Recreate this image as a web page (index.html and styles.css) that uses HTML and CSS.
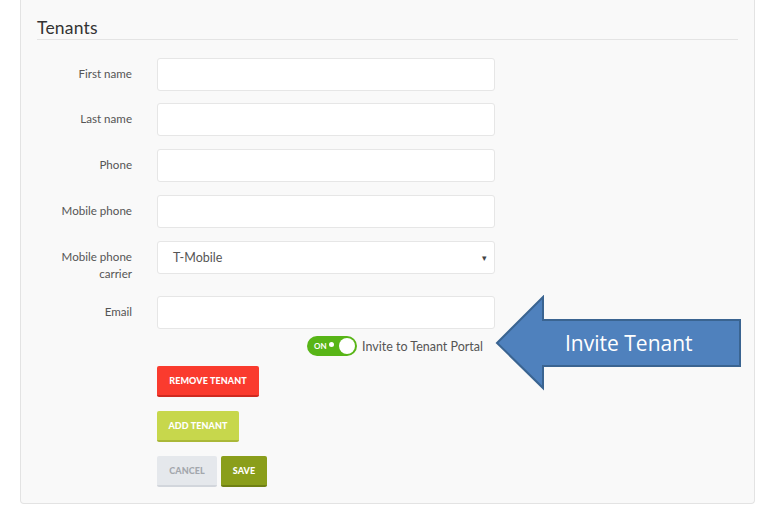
FILE: index.html
```html
<!DOCTYPE html>
<html>
<head>
<meta charset="utf-8">
<link rel="stylesheet" href="styles.css">
</head>
<body>
<div class="panel">
  <h2 class="title">Tenants</h2>
  <div class="row row-first">
    <label class="lbl">First name</label>
    <div class="field"><input class="input" type="text"></div>
  </div>
  <div class="row row-second">
    <label class="lbl">Last name</label>
    <div class="field"><input class="input" type="text"></div>
  </div>
  <div class="row">
    <label class="lbl">Phone</label>
    <div class="field"><input class="input" type="text"></div>
  </div>
  <div class="row">
    <label class="lbl">Mobile phone</label>
    <div class="field"><input class="input" type="text"></div>
  </div>
  <div class="row">
    <label class="lbl">Mobile phone carrier</label>
    <div class="field">
      <div class="select"><span>T-Mobile</span><span class="caret">&#9662;</span></div>
    </div>
  </div>
  <div class="row row-email">
    <label class="lbl">Email</label>
    <div class="field">
      <input class="input" type="text">
      <div class="invite">
        <span class="toggle"><span class="on">ON</span><span class="dot"></span><span class="knob"></span></span>
        <span class="invite-text">Invite to Tenant Portal</span>
      </div>
    </div>
  </div>
  <div class="actions">
    <div><button class="btn btn-remove">REMOVE TENANT</button></div>
    <div><button class="btn btn-add">ADD TENANT</button></div>
    <div class="pair"><button class="btn btn-cancel">CANCEL</button><button class="btn btn-save">SAVE</button></div>
  </div>
</div>
<div class="callout">
  <svg width="250" height="98" viewBox="0 0 250 98">
    <polygon points="2,48 48,2 48,25 245,25 245,71 48,71 48,93" fill="#4f81bd" stroke="#3a6491" stroke-width="2" stroke-linejoin="miter"/>
  </svg>
  <span class="callout-text">Invite Tenant</span>
</div>
</body>
</html>
```
FILE: styles.css
```css
* { box-sizing: border-box; }
body {
  margin: 0;
  background: #ffffff;
  font-family: "Lato", "Open Sans", sans-serif;
  position: relative;
  width: 765px;
  height: 515px;
  overflow: hidden;
}
.panel {
  margin-left: 20px;
  width: 735px;
  height: 504px;
  background: #f9f9f9;
  border: 1px solid #e3e3e3;
  border-top: none;
  border-radius: 0 0 4px 4px;
  padding: 17px 16px 0 16px;
}
.title {
  margin: 0;
  font-weight: 400;
  font-size: 17.5px;
  color: #333;
  line-height: 22px;
  padding-bottom: 0;
  border-bottom: 1px solid #e4e4e4;
  letter-spacing: 0.2px;
}
.row {
  display: flex;
  gap: 25px;
  margin-top: 13px;
}
.row-first { margin-top: 18px; }
.row-second { margin-top: 12px; }
.row-email { margin-top: 14px; }
.lbl {
  width: 95px;
  text-align: right;
  font-size: 11.6px;
  line-height: 17px;
  color: #555;
  padding-top: 7px;
  min-height: 33px;
}
.field { width: 338px; }
.input {
  display: block;
  width: 338px;
  height: 33px;
  border: 1px solid #e6e6e6;
  border-radius: 3px;
  background: #fff;
  outline: none;
  margin: 0;
}
.select {
  display: flex;
  justify-content: space-between;
  align-items: center;
  height: 33px;
  border: 1px solid #e6e6e6;
  border-radius: 3px;
  background: #fff;
  padding: 0 7px 0 15px;
  font-size: 12.5px;
  color: #555;
}
.caret { font-size: 9px; color: #444; }
.invite {
  display: flex;
  justify-content: flex-end;
  align-items: center;
  gap: 5px;
  padding-right: 12px;
  margin-top: 7px;
  height: 20px;
}
.toggle {
  position: relative;
  display: flex;
  align-items: center;
  width: 50px;
  height: 20px;
  border-radius: 10px;
  background: #58b517;
  padding-left: 7px;
}
.on {
  color: #fff;
  font-size: 8px;
  font-weight: 700;
}
.dot {
  width: 5px;
  height: 5px;
  border-radius: 50%;
  background: #fff;
  margin-left: 2px;
  margin-top: -3px;
}
.knob {
  position: absolute;
  right: 2px;
  top: 2px;
  width: 16px;
  height: 16px;
  border-radius: 50%;
  background: #fff;
}
.invite-text {
  font-size: 12.5px;
  color: #555;
}
.actions {
  margin-left: 120px;
  margin-top: 10px;
  display: flex;
  flex-direction: column;
  gap: 14px;
}
.pair { display: flex; gap: 4px; }
.btn {
  border: none;
  border-radius: 2px;
  height: 31px;
  font-family: "Lato", sans-serif;
  font-weight: 900;
  font-size: 9px;
  letter-spacing: 0.1px;
  color: #fff;
  padding: 0;
  margin: 0;
  white-space: nowrap;
  text-align: center;
}
.btn-remove { width: 102px; background: #fa3b2e; border-bottom: 2px solid #cf2a20; }
.btn-add { width: 82px; background: #c7d74c; border-bottom: 2px solid #aab838; }
.btn-cancel { width: 60px; background: #e5e8ec; color: #a3a7ad; border-bottom: 2px solid #d2d6dc; }
.btn-save { width: 46px; background: #8a9e1b; border-bottom: 2px solid #6f8014; }
.callout {
  position: absolute;
  left: 495px;
  top: 295px;
  width: 250px;
  height: 98px;
}
.callout svg { display: block; }
.callout-text {
  position: absolute;
  left: 70px;
  top: 34px;
  font-family: "Open Sans", sans-serif;
  font-size: 21px;
  color: #fff;
  line-height: 28px;
}
```
